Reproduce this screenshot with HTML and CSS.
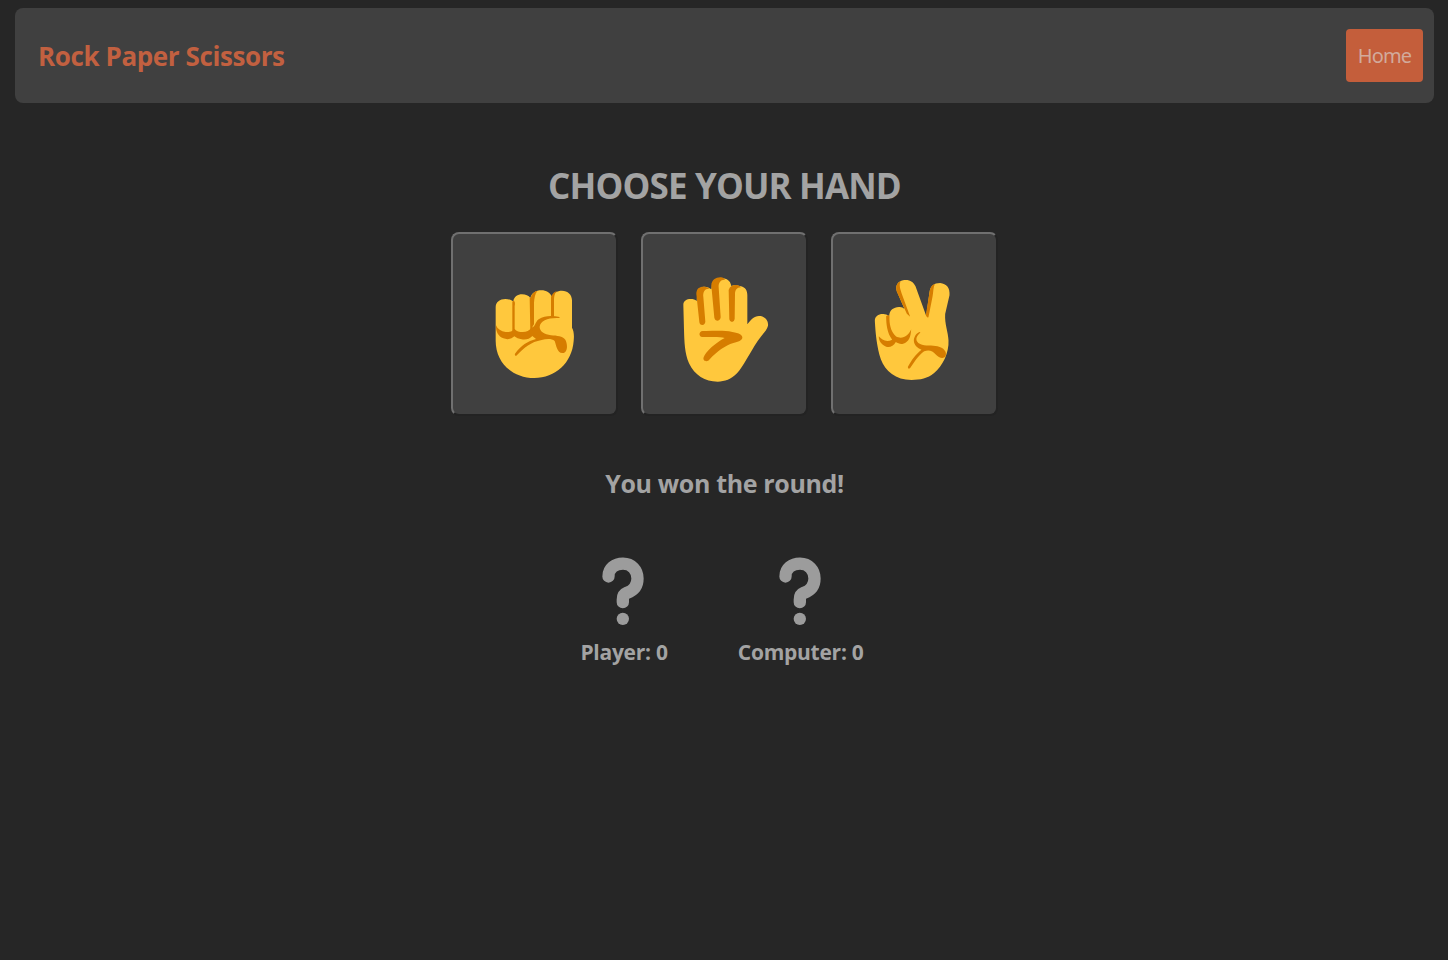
FILE: index.html
```html
<!DOCTYPE html>
<html lang="en">
<head>
<meta charset="utf-8">
<title>Rock Paper Scissors</title>
<link rel="stylesheet" href="styles.css">
</head>
<body>
<nav class="navbar">
  <div class="brand"><span>Rock Paper Scissors</span></div>
  <a class="home">Home</a>
</nav>
<main class="game">
  <h1 class="title"><span>CHOOSE YOUR HAND</span></h1>
  <div class="hands">
    <button class="hand" aria-label="Rock">
      <svg viewBox="-81 -123 489 540">
        <path class="skin" d="M47 97C47 81 60 72 76 72C86 72 94 75 100 79C102 65 113 58 126 58C137 58 146 62 151 69C155 54 168 46 184 46C199 46 211 53 216 66C220 54 231 47 246 47C263 47 276 59 276 76V158C281 167 283 179 281 198C276 264 226 309 163 309C96 309 47 262 47 197Z"/>
        <path class="line" d="M48 151C53 163 63 169 77 171C89 172 97 169 103 161C110 169 118 171 128 171C140 171 148 167 153 160C166 157 165 141 176 133C194 121 216 121 239 126L238 129C205 127 181 137 179 155C178 169 193 179 213 181C231 182 248 184 256 194C264 209 263 235 247 234C231 234 229 211 224 198C215 190 198 192 185 195C152 201 134 217 109 242Q103 244 105 236C123 212 143 198 168 192L157 183C149 192 138 195 125 193C116 192 109 188 103 184C95 192 82 195 70 190C54 183 47 169 48 151Z"/>
        <path class="line" d="M97 80C102 73 107 80 104 94V168H97ZM149 70C155 62 162 74 158 91V168H151ZM153 65C158 53 167 48 172 48C165 56 163 70 162 83V148L154 160ZM213 67C216 57 224 49 231 49C223 55 222 67 222 81V126H213Z"/>
      </svg>
    </button>
    <button class="hand" aria-label="Paper">
      <svg viewBox="-81 -108 489 540">
        <path class="skin" d="M40 104C40 93 50 87 62 87C70 87 75 89 80 93L82 68C84 56 93 50 105 50Q115 50 124 58L126 43C129 29 142 25 155 25C171 25 181 33 184 48C192 44 202 46 213 49C226 52 232 61 232 76V163C242 150 252 138 267 138C284 138 296 151 294 167C291 181 275 195 263 213C239 249 220 289 201 310C184 328 164 335 143 335C105 335 74 316 57 280C44 250 43 214 42 179Z"/>
        <path class="line" d="M79 72C79 54 90 49 103 50C110 50 115 53 118 56C105 55 98 65 100 81L106 155Q105 164 97 165Q89 165 88 156ZM124 47C124 29 139 21 153 22C159 22 163 25 165 29C152 28 145 38 146 52L152 142Q151 151 143 152Q135 152 133 143ZM176 60C179 48 192 43 203 46Q209 48 213 52C200 52 195 62 195 72L194 147Q193 155 186 156Q179 156 178 148Z"/>
        <path class="line" d="M98 183C126 184 158 180 187 186C208 189 218 196 217 203C216 212 205 214 190 219C165 227 142 243 119 268C111 279 97 273 101 262C106 246 135 219 164 204C148 200 120 202 97 201C85 200 86 184 98 183Z"/>
      </svg>
    </button>
    <button class="hand" aria-label="Scissors">
      <svg viewBox="-82.5 -108 489 540">
        <path class="skin" d="M43 152C43 139 54 132 66 132Q76 131 86 138C87 120 99 112 115 111C122 110 128 113 132 117L109 64C103 46 113 32 131 30C147 28 159 35 165 49L197 137L207 67C210 47 220 39 239 39C258 41 269 53 267 76L254 132C252 163 263 185 264 211C266 248 247 288 220 310C202 325 179 330 153 330C106 330 74 304 61 268C49 231 45 190 43 152Z"/>
        <path class="line" d="M109 65C104 49 110 39 121 34C114 44 120 59 124 72L149 140L139 131ZM207 68C209 53 214 45 223 42C218 52 219 66 216 80L204 141Q201 146 196 136Z"/>
        <path class="line" d="M77 139Q82 132 87 139C86 161 90 184 106 199C125 211 145 196 152 178C151 201 145 217 128 221C120 223 112 220 106 216C99 228 88 233 77 230C62 224 54 211 55 199C64 211 79 217 95 209C80 190 77 163 77 139Z"/>
        <path class="line" d="M179 186C169 187 161 199 160 211C160 226 171 234 183 239C166 252 151 273 142 291Q143 299 149 294C162 277 172 257 191 244C204 238 217 242 225 253C235 264 249 268 255 259C261 246 249 233 231 229C216 225 193 229 179 222C162 213 166 199 179 188Z"/>
      </svg>
    </button>
  </div>
  <p class="result"><span>You won the round!</span></p>
  <div class="scores">
    <div class="score">
      <svg class="question" viewBox="96 38 126 206"><path d="M115.500 96C115.500 72 135 57.500 159 57.500C185 57.500 202.500 77 202.500 102C202.500 124 191 138 171 145C161 149 158.500 155 158.500 165V173"/><circle cx="158.500" cy="223" r="18.500"/></svg>
      <span class="player">Player: 0</span>
    </div>
    <div class="score">
      <svg class="question" viewBox="96 38 126 206"><path d="M115.500 96C115.500 72 135 57.500 159 57.500C185 57.500 202.500 77 202.500 102C202.500 124 191 138 171 145C161 149 158.500 155 158.500 165V173"/><circle cx="158.500" cy="223" r="18.500"/></svg>
      <span class="computer">Computer: 0</span>
    </div>
  </div>
</main>
</body>
</html>
```
FILE: styles.css
```css
* { box-sizing: border-box; }
body {
  margin: 0;
  min-height: 960px;
  padding: 8px 14px 0 15px;
  background: #262626;
  color: #a3a3a3;
  font-family: "Open Sans", "Noto Sans", sans-serif;
}
.navbar {
  height: 95px;
  padding: 0 11px 0 23px;
  display: flex;
  align-items: center;
  justify-content: space-between;
  border-radius: 8px;
  background: #404040;
}
.brand { padding-top: 1px; font-size: 26px; font-weight: 700; letter-spacing: -0.4px; color: #c26040; }
.home {
  width: 77px;
  height: 53px;
  border-radius: 4px;
  background: #c45e3b;
  color: #d2aa9c;
  font-family: "Noto Sans", "Open Sans", sans-serif;
  font-size: 20px;
  line-height: 53px;
  text-align: center;
  letter-spacing: -0.9px;
}
.game { display: flex; flex-direction: column; align-items: center; }
.title { margin: 59px 0 0; height: 70px; font-size: 35px; line-height: 48px; font-weight: 700; letter-spacing: -0.85px; }
.hands { display: flex; gap: 23px; }
.hand {
  width: 167px;
  height: 184px;
  padding: 0;
  border: 2px solid;
  border-color: #707070 #232323 #232323 #707070;
  border-radius: 8px;
  background: #404040;
}
.hand svg { display: block; width: 163px; height: 180px; }
.skin { fill: #ffc83d; }
.line { fill: #d67d00; }
.result { margin: 49px 0 0; font-size: 25px; line-height: 36px; font-weight: 700; letter-spacing: -0.35px; }
.scores { display: flex; gap: 70px; margin: 56px 5px 0 0; }
.score { display: flex; flex-direction: column; align-items: center; font-size: 21px; font-weight: 700; line-height: 30px; letter-spacing: -0.25px; }
.question { width: 42px; height: 69px; margin: 0 2px 11px 0; fill: #9c9c9c; }
.question path { fill: none; stroke: #9c9c9c; stroke-width: 37; stroke-linecap: round; }
```
